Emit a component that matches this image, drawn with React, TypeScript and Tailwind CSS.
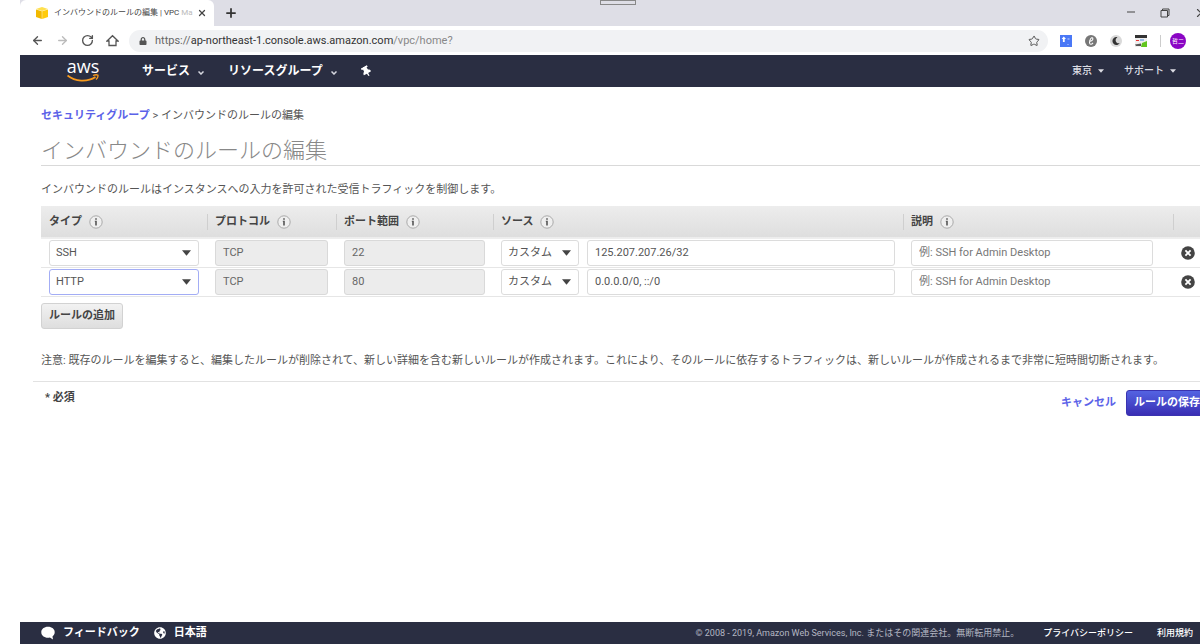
import type { ReactNode } from "react"
import { ArrowLeft, ArrowRight, Home, Plus, RotateCw, Star, X } from "lucide-react"
import { FaLock, FaMoon, FaThumbtack, FaGlobeAmericas } from "react-icons/fa"

const rules = [
  { id: "ssh", type: "SSH", port: "22", source: "125.207.207.26/32", active: false },
  { id: "http", type: "HTTP", port: "80", source: "0.0.0.0/0, ::/0", active: true },
]

function Caret({ className = "" }: { className?: string }) {
  return (
    <svg viewBox="0 0 10 6" className={className} fill="currentColor" aria-hidden="true">
      <path d="M0 0h10L5 6z" />
    </svg>
  )
}

function MiniChevron() {
  return (
    <svg viewBox="0 0 6 4" className="mt-1 h-1 w-1.5" fill="none" stroke="#d5d7df" strokeWidth="1.5" aria-hidden="true">
      <path d="M0.5 0.5 3 3 5.500 0.5" />
    </svg>
  )
}

function InfoIcon() {
  return (
    <svg viewBox="0 0 14 14" className="h-3.5 w-3.5 shrink-0" aria-hidden="true">
      <circle cx="7" cy="7" r="6.2" fill="#efefef" stroke="#aaa" strokeWidth="1" />
      <path d="M6.2 3.2h1.6v1.5H6.2zM5.8 5.8h2v4.700h-1.600V6.8h-.4z" fill="#555" />
    </svg>
  )
}

function DeleteIcon() {
  return (
    <svg viewBox="0 0 14 14" className="h-3.5 w-3.5" aria-hidden="true">
      <circle cx="7" cy="7" r="6.8" fill="#444" />
      <path d="m4.4 4.4 5.2 5.2m0-5.2L4.4 9.6" stroke="#fff" strokeWidth="1.8" />
    </svg>
  )
}

function HeadCell({ children, first = false }: { children?: ReactNode; first?: boolean }) {
  return (
    <th className="h-8 p-0 text-left font-bold">
      <div
        className={`flex h-4 items-center gap-[7px] border-l pl-[7px] ${first ? "border-transparent" : "border-[#cfcfcf]"}`}
      >
        {children}
        {children && <InfoIcon />}
      </div>
    </th>
  )
}

function SelectBox({ label, value, active = false }: { label: string; value: string; active?: boolean }) {
  return (
    <div className="relative">
      <select
        aria-label={label}
        defaultValue={value}
        className={`block h-[26px] w-full appearance-none rounded-[3px] border bg-white pl-1.5 text-[11px] text-[#555] outline-none ${
          active ? "border-[#a3adf5]" : "border-[#dcdcdc]"
        }`}
      >
        <option>{value}</option>
      </select>
      <Caret className="pointer-events-none absolute top-2.5 right-2 h-[6px] w-[9px] text-[#444]" />
    </div>
  )
}

const inputClass =
  "block h-[26px] w-full rounded-[3px] border border-[#dcdcdc] bg-white px-[7px] text-[11px] text-[#555] placeholder:text-[#777]"
const disabledClass =
  "block h-[26px] w-full rounded-[3px] border border-[#d9d9d9] bg-[#ececec] px-[7px] text-[11px] text-[#666]"

function BrowserBar() {
  return (
    <header>
      {/* tabs */}
      <div className="relative ml-5 flex h-[26px] items-center bg-[#dedee6]">
        <div className="flex h-full w-[194px] items-center rounded-t-md bg-white pr-2 pl-4">
          <svg viewBox="0 0 12 12" className="h-3 w-3 shrink-0" aria-hidden="true">
            <path d="M6 0 12 2 6 4 0 2z" fill="#ffe04d" />
            <path d="M0 2.4 5.8 4.3V12L0 10z" fill="#f2b900" />
            <path d="M12 2.4 6.2 4.3V12L12 10z" fill="#ffcb0c" />
          </svg>
          <span className="ml-1.5 flex-1 text-[8px] whitespace-nowrap text-[#444]">
            インバウンドのルールの編集 | VPC <span className="text-[#bbb]">Ma</span>
          </span>
          <button type="button" aria-label="タブを閉じる" className="ml-1">
            <X className="h-2.5 w-2.5 text-[#444]" strokeWidth={3} />
          </button>
        </div>
        <button type="button" aria-label="新しいタブ" className="ml-2.5">
          <Plus className="h-3.5 w-3.5 text-[#333]" strokeWidth={3} />
        </button>
        <div className="absolute top-0 left-[580px] h-[5px] w-9 border border-[#888]" />
        <div className="-mr-2 ml-auto flex h-full items-center gap-6 text-[#444]">
          <svg viewBox="0 0 10 10" className="h-2.5 w-2.5" aria-hidden="true">
            <path d="M1 4h8" stroke="currentColor" />
          </svg>
          <svg viewBox="0 0 10 10" className="h-2.5 w-2.5" fill="none" stroke="currentColor" aria-hidden="true">
            <path d="M1 2.5h6.5V9H1zM2.5 2.5V1H9v6.5H7.5" />
          </svg>
          <X className="h-3.5 w-3.5" strokeWidth={2} />
        </div>
      </div>

      {/* address bar */}
      <div className="ml-5 flex h-[29px] items-center bg-white pr-3.5 pl-[11px]">
        <div className="flex items-center gap-3 text-[#555]">
          <ArrowLeft className="h-[13px] w-[13px]" strokeWidth={2.5} />
          <ArrowRight className="h-[13px] w-[13px] text-[#bbb]" strokeWidth={2.5} />
          <RotateCw className="h-[13px] w-[13px]" strokeWidth={2.5} />
          <svg viewBox="0 0 13 13" className="h-[13px] w-[13px]" fill="none" stroke="currentColor" strokeWidth="1.300" aria-hidden="true">
            <path d="M1 7 6.500 1.700 12 7H10v4.500H3V7z" />
          </svg>
        </div>
        <div className="ml-2.5 flex h-[22px] flex-1 items-center rounded-full bg-[#f1f2f4] pr-2 pl-2.5">
          <FaLock className="h-2 w-2 text-[#555]" />
          <span className="ml-2 flex-1 text-[11px] text-[#888]">
            <span className="text-[#666]">https://</span>
            <span className="text-[#333]">ap-northeast-1.console.aws.amazon.com</span>
            /vpc/home?
          </span>
          <Star className="h-3 w-3 text-[#555]" strokeWidth={2} />
        </div>
        <div className="ml-3 flex items-center gap-[13px]">
          <svg viewBox="0 0 12 12" className="h-3 w-3" aria-hidden="true">
            <path d="M0 0h12v12H0z" fill="#4a78f6" />
            <path d="M3.8 1.5 6 4H4.7v3H2.9V4H1.6z" fill="#fff" />
            <path d="M7.5 3h2v2h-2zM7 9h2v1H7z" fill="#86a6fa" />
          </svg>
          <svg viewBox="0 0 12 12" className="h-3 w-3" aria-hidden="true">
            <circle cx="6" cy="6" r="6" fill="#777" />
            <path
              d="M4.2 6.4C6.5 6.6 8.6 4.8 7.7 3 6.5 1.8 4.5 4.6 4.5 7.5c.2 2.5 2.2 2 3.5.3"
              fill="none"
              stroke="#fff"
              strokeWidth="1.1"
            />
          </svg>
          <span className="flex h-3 w-3 items-center justify-center rounded-full bg-[#d9d9d9]">
            <FaMoon className="h-2 w-2 text-[#333]" />
          </span>
          <svg viewBox="0 0 12 12" className="h-3 w-3" aria-hidden="true">
            <path d="M0 0h12v12H0z" fill="#eee" />
            <path d="M0 0h12v3H0z" fill="#333" />
            <path d="M7 8 12 6v6H6z" fill="#62c61f" />
            <path d="M1 5.5h3" stroke="#e33" />
            <path d="M5 5h4" stroke="#48d" />
            <path d="M0 9.5l6-1V11H1z" fill="#555" />
          </svg>
          <div className="h-3 w-px bg-[#ccc]" />
          <span className="-ml-1 flex h-4 w-4 items-center justify-center rounded-full bg-[#8a05c4] text-[6px] text-white">
            哲二
          </span>
        </div>
      </div>
    </header>
  )
}

function ConsoleNav() {
  return (
    <nav className="ml-5 flex h-8 items-center bg-[#2a2e42] pr-6 pl-[47px] text-xs font-bold text-white">
      <a href="#" aria-label="aws" className="flex w-8 flex-col items-center">
        <span className="font-['Open_Sans',sans-serif] text-[18px] leading-3 font-medium">aws</span>
        <svg viewBox="0 0 32 8" className="mt-0.5 h-2 w-8" fill="none" stroke="#f79a1c" aria-hidden="true">
          <path d="M0.5 1.5C8 7.5 20 8.5 28.5 3" strokeWidth="1.8" />
          <path d="M26 1.500c2-.8 4-.8 4.800-.4.4.9-.3 3-1.800 4.400" strokeWidth="1.300" />
        </svg>
      </a>
      <button type="button" className="ml-[43px] flex items-center gap-2">
        サービス <MiniChevron />
      </button>
      <button type="button" className="ml-6 flex items-center gap-2">
        リソースグループ <MiniChevron />
      </button>
      <button type="button" aria-label="ピン留め" className="ml-6">
        <FaThumbtack className="h-[11px] w-[11px] -rotate-30" />
      </button>
      <div className="ml-auto flex items-center gap-5 text-[10px] font-medium text-[#dcdde3]">
        <button type="button" className="flex items-center gap-1.5">
          東京 <Caret className="h-1 w-1.5" />
        </button>
        <button type="button" className="flex items-center gap-1.5">
          サポート <Caret className="h-1 w-1.5" />
        </button>
      </div>
    </nav>
  )
}

function RuleTable() {
  return (
    <table className="mt-2 w-full table-fixed border-collapse">
      <colgroup>
        <col className="w-[166px]" />
        <col className="w-[129px]" />
        <col className="w-[157px]" />
        <col />
        <col className="w-[270px]" />
        <col className="w-[27px]" />
      </colgroup>
      <thead>
        <tr className="border-b border-[#eee] bg-linear-to-b from-[#ededed] to-[#dedede] text-[#444]">
          <HeadCell first>タイプ</HeadCell>
          <HeadCell>プロトコル</HeadCell>
          <HeadCell>ポート範囲</HeadCell>
          <HeadCell>ソース</HeadCell>
          <HeadCell>説明</HeadCell>
          <HeadCell />
        </tr>
      </thead>
      <tbody>
        {rules.map((rule) => (
          <tr key={rule.id} className="h-[29px] border-b border-[#e6e6e6]">
            <td className="px-2 py-px">
              <SelectBox label="タイプ" value={rule.type} active={rule.active} />
            </td>
            <td className="px-2 py-px">
              <input aria-label="プロトコル" disabled defaultValue="TCP" className={disabledClass} />
            </td>
            <td className="px-2 py-px">
              <input aria-label="ポート範囲" disabled defaultValue={rule.port} className={disabledClass} />
            </td>
            <td className="px-2 py-px">
              <div className="flex gap-2">
                <div className="w-[78px]">
                  <SelectBox label="ソースの種類" value="カスタム" />
                </div>
                <div className="flex-1">
                  <input aria-label="ソース" defaultValue={rule.source} className={inputClass} />
                </div>
              </div>
            </td>
            <td className="py-px pr-5 pl-2">
              <input aria-label="説明" placeholder="例: SSH for Admin Desktop" className={inputClass} />
            </td>
            <td className="py-px pl-2">
              <button type="button" aria-label="ルールの削除" className="block">
                <DeleteIcon />
              </button>
            </td>
          </tr>
        ))}
      </tbody>
    </table>
  )
}

export default function App() {
  return (
    <div className="flex min-h-screen flex-col overflow-hidden bg-white font-['Roboto','Noto_Sans_CJK_JP',sans-serif] text-[11px] leading-4 text-[#555]">
      <BrowserBar />
      <ConsoleNav />

      <main className="flex-1 pl-[41px]">
        <div className="pt-[21px]">
          <a href="#" className="font-bold text-[#5b62e8]">
            セキュリティグループ
          </a>
          {" > インバウンドのルールの編集"}
        </div>

        <h1 className="mt-[13px] border-b border-[#d9d9d9] text-[22px] leading-7 font-light text-[#888]">
          インバウンドのルールの編集
        </h1>

        <p className="mt-4">インバウンドのルールはインスタンスへの入力を許可された受信トラフィックを制御します。</p>

        <RuleTable />

        <button
          type="button"
          className="mt-1.5 h-[26px] rounded-[3px] border border-[#d2d2d2] bg-linear-to-b from-[#f2f2f2] to-[#dedede] px-[7px] font-bold text-[#444]"
        >
          ルールの追加
        </button>

        <p className="mt-6 whitespace-nowrap">
          注意: 既存のルールを編集すると、編集したルールが削除されて、新しい詳細を含む新しいルールが作成されます。これにより、そのルールに依存するトラフィックは、新しいルールが作成されるまで非常に短時間切断されます。
        </p>

        {/* actions */}
        <div className="mt-3 -ml-2 flex items-start border-t border-[#e2e2e2] pt-2 pl-3">
          <span className="font-bold text-[#444]">* 必須</span>
          <div className="-mr-2 ml-auto flex items-center gap-2.5">
            <a href="#" className="font-bold text-[#5b62e8]">
              キャンセル
            </a>
            <button
              type="button"
              className="h-[26px] rounded-[3px] border border-[#3a33b0] bg-linear-to-b from-[#5463e2] to-[#3a2db4] px-[7px] font-bold whitespace-nowrap text-white"
            >
              ルールの保存
            </button>
          </div>
        </div>
      </main>

      <footer className="ml-5 flex h-[22px] items-center bg-[#2a2e42] pr-[7px] pl-[21px] text-white">
        <a href="#" className="flex items-center gap-2 font-bold">
          <svg viewBox="0 0 14 14" className="h-3.5 w-3.5" fill="currentColor" aria-hidden="true">
            <path d="M7 0.8C3 0.8 0.3 3.2 0.3 6.3S3 11.8 7 11.8c.7 0 1.300-.1 1.900-.2L12 13.500l-.5-3c1.400-1 2.200-2.500 2.200-4.200C13.700 3.200 11 .8 7 .8z" />
          </svg>
          フィードバック
        </a>
        <a href="#" className="ml-3.5 flex items-center gap-2 font-bold">
          <FaGlobeAmericas className="h-3 w-3" />
          日本語
        </a>
        <span className="ml-auto text-[9px] text-[#b4b7c2]">
          © 2008 - 2019, Amazon Web Services, Inc. またはその関連会社。無断転用禁止。
        </span>
        <a href="#" className="ml-6 text-[9px] font-medium">
          プライバシーポリシー
        </a>
        <a href="#" className="ml-6 text-[9px] font-medium">
          利用規約
        </a>
      </footer>
    </div>
  )
}
